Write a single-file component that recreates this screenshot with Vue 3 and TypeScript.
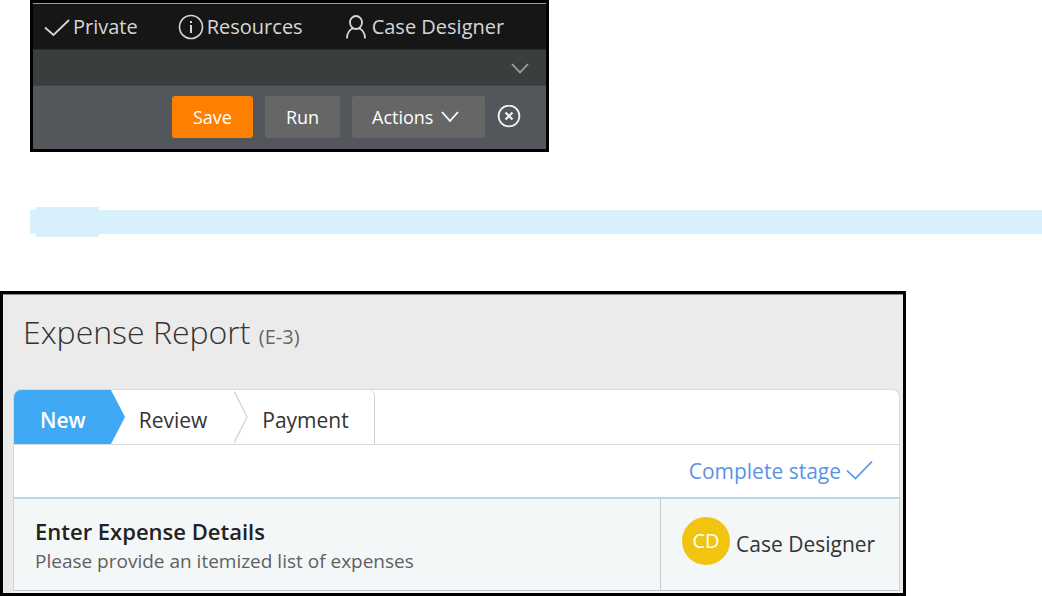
<script setup lang="ts">
import { ref } from 'vue'

interface Stage {
  id: string
  label: string
}

const stages: Stage[] = [
  { id: 'new', label: 'New' },
  { id: 'review', label: 'Review' },
  { id: 'payment', label: 'Payment' },
]
const current = ref('new')
</script>

<template>
  <main class="page">
    <section class="designer">
      <nav class="topbar">
        <button class="top-item" type="button">
          <svg width="29" height="22" viewBox="0 0 29 22" fill="none" stroke="currentColor" stroke-width="1.8">
            <path d="M1 11.5 L9.5 19 L25 4" />
          </svg>
          <span>Private</span>
        </button>
        <button class="top-item resources" type="button">
          <svg width="29" height="26" viewBox="0 0 29 26" fill="none" stroke="currentColor">
            <circle cx="13" cy="13" r="11.5" stroke-width="1.6" />
            <path d="M13 11 V19" stroke-width="2" />
            <path d="M13 7 V9" stroke-width="2" />
          </svg>
          <span>Resources</span>
        </button>
        <button class="top-item user" type="button">
          <svg width="26" height="26" viewBox="0 0 26 26" fill="none" stroke="currentColor" stroke-width="1.8">
            <ellipse cx="10" cy="8.5" rx="6" ry="6.5" />
            <path d="M1 24.5 C1 18.5 3.5 15.5 7.5 14 M12.5 14 C16.5 15.5 19 18.5 19 24.5" />
          </svg>
          <span>Case Designer</span>
        </button>
      </nav>
      <div class="subbar">
        <button class="plain" type="button" aria-label="Expand">
          <svg width="18" height="12" viewBox="0 0 18 12" fill="none" stroke="#a3a4a4" stroke-width="1.8">
            <path d="M1 2 L9 10.5 L17 2" />
          </svg>
        </button>
      </div>
      <div class="toolbar">
        <button class="action save" type="button">Save</button>
        <button class="action run" type="button">Run</button>
        <button class="action more" type="button">
          <span>Actions</span>
          <svg width="18" height="12" viewBox="0 0 18 12" fill="none" stroke="currentColor" stroke-width="1.8">
            <path d="M1 1 L9 10 L17 1" />
          </svg>
        </button>
        <button class="plain" type="button" aria-label="Close">
          <svg width="24" height="24" viewBox="0 0 24 24" fill="none" stroke="#f2f2f2">
            <circle cx="12" cy="11" r="10.4" stroke-width="1.8" />
            <path d="M8.5 7.5 L15.5 14.5 M15.5 7.5 L8.5 14.5" stroke-width="2.2" />
          </svg>
        </button>
      </div>
    </section>

    <div class="band"><div class="band-tag"></div></div>

    <section class="case">
      <h1 class="title">Expense Report <small>(E-3)</small></h1>
      <div class="card">
        <div class="stages">
          <template v-for="(stage, i) in stages" :key="stage.id">
            <button
              class="stage"
              :class="{ active: stage.id === current, last: i === stages.length - 1 }"
              type="button"
              @click="current = stage.id"
            >
              {{ stage.label }}
            </button>
            <svg v-if="i < stages.length - 1" class="arrow" width="14" height="54" viewBox="0 0 14 54">
              <path v-if="stage.id === current" d="M0 0 L14 27 L0 54 Z" fill="#3fa9f5" />
              <path v-else d="M0 1 L13 27 L0 53" fill="none" stroke="#d8d8d8" stroke-width="1.5" />
            </svg>
          </template>
        </div>
        <div class="complete">
          <a href="#">
            <span>Complete stage</span>
            <svg width="28" height="20" viewBox="0 0 28 20" fill="none" stroke="currentColor" stroke-width="1.7">
              <path d="M1 9.5 L9.5 17.5 L26 0.5" />
            </svg>
          </a>
        </div>
      </div>
      <div class="task">
        <div class="details">
          <h2>Enter Expense Details</h2>
          <p>Please provide an itemized list of expenses</p>
        </div>
        <div class="assignee">
          <span class="avatar">CD</span>
          <span class="name">Case Designer</span>
        </div>
      </div>
      <div class="next"></div>
    </section>
  </main>
</template>

<style>
body {
  background: #fff;
}
</style>

<style scoped>
.page,
.page * {
  box-sizing: border-box;
}
.page {
  font-family: "Open Sans", "Noto Sans", sans-serif;
  overflow: hidden;
}
button {
  font: inherit;
  border: 0;
  margin: 0;
  padding: 0;
  background: none;
  color: inherit;
  cursor: pointer;
}
svg {
  display: block;
  flex: none;
}
.designer {
  width: 49.8%;
  min-width: 519px;
  margin-left: 30px;
  border: 3px solid #000;
}
.topbar {
  display: flex;
  align-items: center;
  height: 47px;
  padding-left: 11px;
  border-top: 1px solid #999;
  border-bottom: 1px solid #2b2c2c;
  background: #161616;
  color: #d6d6d6;
  font-size: 20px;
}
.top-item {
  display: flex;
  align-items: center;
  white-space: nowrap;
}
.resources {
  margin-left: 40px;
}
.user {
  margin-left: 43px;
}
.subbar {
  display: flex;
  align-items: center;
  justify-content: flex-end;
  height: 36px;
  padding-right: 17px;
  background: #3b3e3f;
  border-bottom: 1px solid #454849;
}
.toolbar {
  display: flex;
  align-items: center;
  justify-content: flex-end;
  gap: 12px;
  padding: 10px 25px 11px;
  background: #53565b;
}
.action {
  display: flex;
  align-items: center;
  justify-content: center;
  height: 42px;
  border-radius: 3px;
  background: #666;
  color: #fff;
  font-size: 18px;
}
.save {
  width: 81px;
  background: #ff8000;
}
.run {
  width: 75px;
}
.more {
  width: 133px;
  gap: 8px;
  justify-content: flex-start;
  padding-left: 20px;
}
.band {
  display: flex;
  align-items: center;
  height: 24px;
  margin: 58px 0 57px 30px;
  padding-left: 6px;
  background: #d7f0fc;
}
.band-tag {
  width: 63px;
  height: 30px;
  flex: none;
  background: #d7f0fc;
}
.case {
  margin-right: 136px;
  border: 3px solid #000;
  background: #ebebeb;
  color: #333;
}
.title {
  height: 95px;
  margin: 0;
  padding: 16px 20px 0;
  border-top: 1px solid #888;
  font-size: 32px;
  line-height: 42px;
  font-weight: 300;
}
.title small {
  color: #666;
  font-size: 20px;
  font-weight: 400;
}
.card {
  margin: 0 3px 0 10px;
  border: 1px solid #dadada;
  border-bottom: 0;
  border-radius: 8px 8px 0 0;
  background: #fff;
  overflow: hidden;
}
.stages {
  display: flex;
  height: 55px;
  border-bottom: 1px solid #dadada;
  font-size: 21px;
}
.stage {
  padding: 5px 27px 0 14px;
}
.stage.active {
  padding: 5px 25px 0 26px;
  background: #3fa9f5;
  color: #fff;
  font-weight: 600;
}
.stage.last {
  padding-right: 25px;
  border-right: 1px solid #d0d0d0;
  border-top-right-radius: 6px;
}
.complete {
  display: flex;
  align-items: center;
  justify-content: flex-end;
  height: 52px;
  padding-right: 25px;
}
.complete a {
  display: flex;
  align-items: center;
  gap: 5px;
  color: #5b93e6;
  font-size: 21px;
  text-decoration: none;
}
.task {
  display: flex;
  height: 94px;
  margin: 0 3px 0 10px;
  border: 1px solid #b9dcee;
  border-top: 2px solid #b9d8e8;
  border-bottom-color: #c4c8ca;
  background: #f3f7f8;
}
.details {
  flex: 1;
  padding: 16px 21px 0;
}
h2 {
  margin: 0;
  color: #222;
  font-size: 22px;
  line-height: 32px;
  font-weight: 600;
}
p {
  margin: 0;
  color: #606060;
  font-size: 19px;
  line-height: 28px;
}
.assignee {
  display: flex;
  align-items: flex-start;
  width: 239px;
  padding: 18px 0 0 21px;
  border-left: 1px solid #c8cccd;
}
.avatar {
  width: 48px;
  height: 48px;
  border-radius: 50%;
  background: #f1c40f;
  color: #fff;
  font-size: 20px;
  line-height: 48px;
  text-align: center;
}
.name {
  margin-left: 6px;
  font-size: 21px;
  line-height: 54px;
  white-space: nowrap;
}
.next {
  height: 2px;
  margin: 0 3px 0 10px;
  background: #f3f7f8;
}
</style>
